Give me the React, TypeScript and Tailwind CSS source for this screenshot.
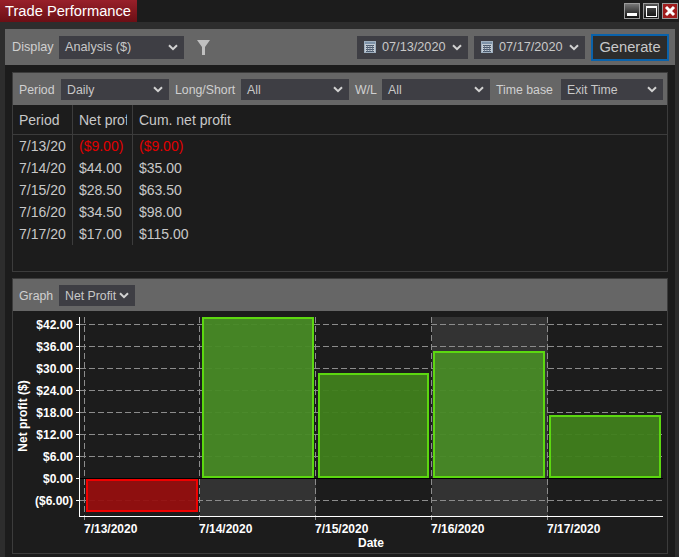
import React from "react";

const Chevron = () => (
  <svg width="10" height="7" viewBox="0 0 10 7" className="shrink-0">
    <path d="M1 1.2 L5 5.2 L9 1.2" fill="none" stroke="#d2d2d2" strokeWidth="2" />
  </svg>
);

const Select = ({ label, w, h }: { label: string; w: string; h: string }) => (
  <div className={`flex items-center justify-between bg-[#3e3e44] text-[#c8c8c8] pl-[6px] pr-[6px] ${w} ${h}`}>
    <span className="whitespace-nowrap pt-[2px]">{label}</span>
    <Chevron />
  </div>
);

const Calendar = () => (
  <svg width="12" height="12" viewBox="0 0 12 12" className="shrink-0">
    <rect x="0.5" y="0.5" width="11" height="11" fill="#c4ccd4" stroke="#9fb0c0" />
    <rect x="1" y="1" width="10" height="2" fill="#7d92a8" />
    <path d="M2 4.5h8M2 6.5h8M2 8.5h8M2 10.5h8" stroke="#47566a" strokeWidth="1" />
    <path d="M3.5 4v7M6 4v7M8.5 4v7" stroke="#5d6c80" strokeWidth="0.8" />
  </svg>
);

const DateBox = ({ v }: { v: string }) => (
  <div className="flex items-center bg-[#3e3e44] text-[#c8c8c8] w-[111px] h-[23px] pl-[7px] pr-[6px]">
    <Calendar />
    <span className="ml-[6px] flex-1 pt-[2px]">{v}</span>
    <Chevron />
  </div>
);

const WinBtn = ({ children, bg }: { children: React.ReactNode; bg: string }) => (
  <div className={`w-[16px] h-[16px] border border-[#9a9a9a] flex items-center justify-center ${bg}`}>{children}</div>
);

const rows = [
  ["7/13/20", "($9.00)", "($9.00)"],
  ["7/14/20", "$44.00", "$35.00"],
  ["7/15/20", "$28.50", "$63.50"],
  ["7/16/20", "$34.50", "$98.00"],
  ["7/17/20", "$17.00", "$115.00"],
];

const ticks = [
  ["$42.00", 324],
  ["$36.00", 346],
  ["$30.00", 368],
  ["$24.00", 390],
  ["$18.00", 412],
  ["$12.00", 434],
  ["$6.00", 456],
  ["$0.00", 478],
  ["($6.00)", 500],
] as const;

const xs = [
  ["7/13/2020", 84],
  ["7/14/2020", 199],
  ["7/15/2020", 315],
  ["7/16/2020", 431],
  ["7/17/2020", 547],
] as const;

const Chart = () => (
  <svg width="655" height="242" viewBox="13 311 655 242" className="block" style={{ fontFamily: "'Liberation Sans', Arial, sans-serif" }}>
    <rect x="200" y="478" width="116" height="38" fill="#333333" />
    <rect x="432" y="317" width="116" height="199" fill="#333333" />
    {ticks.map(([, y]) => (
      <line key={y} x1="80" x2="663" y1={y + 0.5} y2={y + 0.5} stroke="#8c8c8c" strokeDasharray="6 3" />
    ))}
    {xs.map(([, x]) => (
      <line key={x} x1={x + 0.5} x2={x + 0.5} y1="317" y2="520" stroke="#8c8c8c" strokeDasharray="6 3" />
    ))}
    <line x1="80" x2="663" y1="478.5" y2="478.5" stroke="#000000" />
    <rect x="87" y="480" width="110" height="31" fill="rgba(150,15,15,0.94)" stroke="#f00000" strokeWidth="2" />
    <rect x="203" y="318" width="110" height="159" fill="rgba(72,138,38,0.95)" stroke="#5cd810" strokeWidth="2" />
    <rect x="319" y="374" width="109" height="103" fill="rgba(64,127,28,0.95)" stroke="#5cd810" strokeWidth="2" />
    <rect x="434" y="352" width="110" height="125" fill="rgba(72,138,38,0.95)" stroke="#5cd810" strokeWidth="2" />
    <rect x="550" y="416" width="110" height="61" fill="rgba(64,127,28,0.95)" stroke="#5cd810" strokeWidth="2" />
    <line x1="79.5" x2="79.5" y1="317" y2="517" stroke="#ffffff" />
    <line x1="79" x2="663" y1="516.5" y2="516.5" stroke="#ffffff" />
    {ticks.map(([t, y]) => (
      <g key={t}>
        <line x1="76" x2="80" y1={y + 0.5} y2={y + 0.5} stroke="#ffffff" />
        <text x="73" y={y + 5} textAnchor="end" fill="#ffffff" fontSize="12" fontWeight="700">{t}</text>
      </g>
    ))}
    {xs.map(([t, x]) => (
      <text key={t} x={x} y="533" fill="#ffffff" fontSize="12" fontWeight="700">{t}</text>
    ))}
    <text x="371" y="547" textAnchor="middle" fill="#ffffff" fontSize="12" fontWeight="700">Date</text>
    <text transform="translate(27 416) rotate(-90)" textAnchor="middle" fill="#ffffff" fontSize="12" fontWeight="700">Net profit ($)</text>
  </svg>
);

export default function App() {
  return (
    <div className="w-[679px] h-[557px] bg-[#2d2d2d] flex flex-col overflow-hidden text-[12px] text-[#c8c8c8]" style={{ fontFamily: "'Liberation Sans', Arial, sans-serif" }}>
      <div className="h-[22px] bg-[#1c1c1c] flex items-start justify-between">
        <div className="w-[137px] h-[22px] bg-gradient-to-b from-[#98202a] to-[#6c0f15] text-white text-[14.7px] pl-[5px] leading-[22px]">Trade Performance</div>
        <div className="flex gap-[3px] pt-[3px] pr-[1px]">
          <WinBtn bg="bg-gradient-to-b from-[#777777] to-[#111111]"><div className="w-[10px] h-[3px] bg-white mt-[7px]" /></WinBtn>
          <WinBtn bg="bg-gradient-to-b from-[#555555] to-[#111111]"><div className="w-[11px] h-[11px] border border-white border-t-2" /></WinBtn>
          <WinBtn bg="bg-[#a01c1c]">
            <svg width="12" height="12" viewBox="0 0 12 12"><path d="M2 2 L10 10 M10 2 L2 10" stroke="#ffffff" strokeWidth="3" /></svg>
          </WinBtn>
        </div>
      </div>
      <div className="flex-1 flex flex-col pt-[7px] pl-[5px] pr-[4px]">
        <div className="flex-1 flex flex-col bg-[#1c1c1c]">
          <div className="h-[36px] bg-[#666666] flex items-center pl-[7px] text-[12.7px]">
            <span className="w-[47px] text-[#d0d0d0] pt-[2px]">Display</span>
            <Select label="Analysis ($)" w="w-[125px]" h="h-[23px]" />
            <svg width="13" height="15" viewBox="0 0 13 15" className="ml-[13px]">
              <path d="M0 0 H13 L8 7 V15 L5 15 V7 Z" fill="#c0c0c0" />
            </svg>
            <div className="flex-1" />
            <DateBox v="07/13/2020" />
            <div className="w-[6px]" />
            <DateBox v="07/17/2020" />
            <div className="w-[6px]" />
            <div className="w-[78px] h-[27px] border-2 border-[#0a62aa] bg-[#2c2c2c] text-[#c8c8c8] text-[14.7px] flex items-center justify-center">Generate</div>
            <div className="w-[6px]" />
          </div>
          <div className="flex-1 flex flex-col gap-[6px] pt-[7px] px-[7px] pb-[3px]">
            <div className="h-[200px] border border-[#3c3c3c] flex flex-col">
              <div className="h-[32px] bg-[#666666] flex items-center pl-[6px] pt-[1px] text-[12.3px]">
                <span className="w-[42px] text-[#d0d0d0] pt-[2px]">Period</span>
                <Select label="Daily" w="w-[108px]" h="h-[21px]" />
                <span className="w-[66px] pl-[6px] pt-[2px] text-[#d0d0d0] box-content">Long/Short</span>
                <Select label="All" w="w-[108px]" h="h-[21px]" />
                <span className="w-[27px] pl-[6px] pt-[2px] text-[#d0d0d0] box-content">W/L</span>
                <Select label="All" w="w-[108px]" h="h-[21px]" />
                <span className="w-[65px] pl-[6px] pt-[2px] text-[#d0d0d0] box-content">Time base</span>
                <Select label="Exit Time" w="w-[102px]" h="h-[21px]" />
              </div>
              <div className="flex h-[30px] border-b border-[#3c3c3c] text-[14px] leading-[30px]">
                <div className="w-[60px] pl-[6px] border-r border-[#3c3c3c]">Period</div>
                <div className="w-[60px] pl-[6px] border-r border-[#3c3c3c]">
                  <div className="w-[48px] overflow-hidden whitespace-nowrap">Net profit</div>
                </div>
                <div className="pl-[6px]">Cum. net profit</div>
              </div>
              <div className="flex flex-col text-[14px] leading-[22px]">
                {rows.map((r) => {
                  const red = r[1].startsWith("(");
                  return (
                    <div key={r[0]} className="flex h-[22px]">
                      <div className="w-[60px] pl-[6px] border-r border-[#3c3c3c]">{r[0]}</div>
                      <div className={`w-[60px] pl-[6px] border-r border-[#3c3c3c] whitespace-nowrap ${red ? "text-[#e00000]" : ""}`}>{r[1]}</div>
                      <div className={`pl-[6px] ${red ? "text-[#e00000]" : ""}`}>{r[2]}</div>
                    </div>
                  );
                })}
              </div>
            </div>
            <div className="flex-1 border border-[#3c3c3c] flex flex-col">
              <div className="h-[32px] bg-[#666666] flex items-center pl-[6px] pt-[1px] text-[12.3px]">
                <span className="w-[40px] text-[#d0d0d0] pt-[2px]">Graph</span>
                <Select label="Net Profit" w="w-[76px]" h="h-[21px]" />
              </div>
              <Chart />
            </div>
          </div>
        </div>
      </div>
    </div>
  );
}
